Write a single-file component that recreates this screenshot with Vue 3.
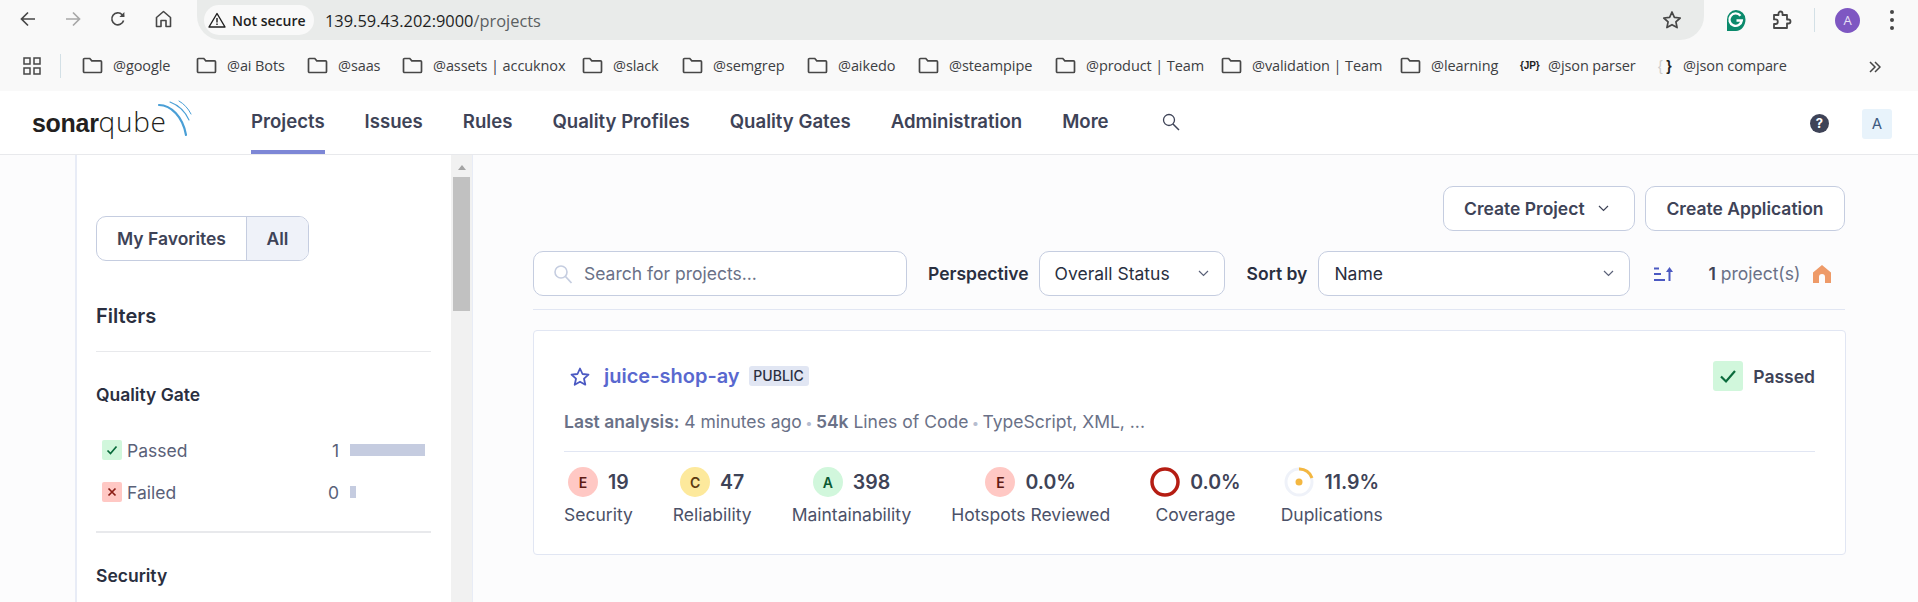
<script setup>
const bookmarks = [
  { label: '@google', width: 114 }, { label: '@ai Bots', width: 111 }, { label: '@saas', width: 95 },
  { label: '@assets | accuknox', width: 180 }, { label: '@slack', width: 100 }, { label: '@semgrep', width: 125 },
  { label: '@aikedo', width: 111 }, { label: '@steampipe', width: 137 }, { label: '@product | Team', width: 166 },
  { label: '@validation | Team', width: 179 }, { label: '@learning', width: 120 }
]
const navItems = ['Projects', 'Issues', 'Rules', 'Quality Profiles', 'Quality Gates', 'Administration', 'More']
const ratings = [
  { grade: 'E', cls: 'bad', value: '19', label: 'Security' },
  { grade: 'C', cls: 'mid', value: '47', label: 'Reliability' },
  { grade: 'A', cls: 'good', value: '398', label: 'Maintainability' },
  { grade: 'E', cls: 'bad', value: '0.0%', label: 'Hotspots Reviewed' }
]
</script>

<template>
  <div class="page">
    <div class="chrome-top">
      <svg class="ic back" width="16" height="16" viewBox="0 0 16 16"><path d="M15 8H2M8 1.5 1.5 8 8 14.5" fill="none" stroke="#474747" stroke-width="1.7"/></svg>
      <svg class="ic fwd" width="16" height="16" viewBox="0 0 16 16"><path d="M1 8h13M8 1.5 14.5 8 8 14.5" fill="none" stroke="#a8a8a8" stroke-width="1.7"/></svg>
      <svg class="ic reload" width="16" height="16" viewBox="0 0 16 16"><path d="M13.6 9.5A6 6 0 1 1 12.2 3.7L14 5.5" fill="none" stroke="#474747" stroke-width="1.6"/><path d="M14.4 1v5h-5z" fill="#474747"/></svg>
      <svg class="ic home" width="17" height="18" viewBox="0 0 17 18"><path d="M1.5 7.5 8.5 1.5l7 6V16.5H11V10.5H6v6H1.500z" fill="none" stroke="#474747" stroke-width="1.6" stroke-linejoin="round"/></svg>
      <div class="urlbar">
        <div class="secure">
          <svg width="18" height="16" viewBox="0 0 18 16"><path d="M9 1.500 17 15H1z" fill="none" stroke="#1f1f1f" stroke-width="1.4" stroke-linejoin="round"/><path d="M9 6v4.500M9 11.500v1.500" stroke="#1f1f1f" stroke-width="1.400"/></svg>
          <span>Not secure</span>
        </div>
        <div class="url"><span class="host">139.59.43.202:9000</span><span class="path">/projects</span></div>
        <svg class="urlstar" width="20" height="20" viewBox="0 0 20 20"><path d="m10 2 2.400 5.400 5.800.600-4.300 3.900 1.200 5.700L10 14.700l-5.100 2.900 1.200-5.700L1.800 8l5.800-.600z" fill="none" stroke="#474747" stroke-width="1.700" stroke-linejoin="round"/></svg>
      </div>
      <svg class="gram" width="20" height="23" viewBox="0 0 20 23"><path d="M10 1a9.500 9.500 0 0 1 9.500 9.500c0 6-4 11.500-9.500 11.500H1V10.500A9.500 9.500 0 0 1 10 1z" fill="#0b8a6c"/><path d="M14.500 6.800A6.200 6.200 0 1 0 15.800 11.500H10.500" fill="none" stroke="#fff" stroke-width="2.300"/></svg>
      <svg class="puzzle" width="21" height="21" viewBox="0 0 21 21"><path d="M3 5h4.500V3.500a2 2 0 0 1 4 0V5H16v4.500h1.500a2 2 0 0 1 0 4H16V18H3v-4h1.500a2.300 2.300 0 0 0 0-4.600H3z" fill="none" stroke="#474747" stroke-width="1.800" stroke-linejoin="round"/></svg>
      <div class="tsep"></div>
      <div class="profile">A</div>
      <div class="kebab"><i></i><i></i><i></i></div>
    </div>

    <div class="bookmarks">
      <svg class="apps" width="18" height="18" viewBox="0 0 18 18"><g fill="none" stroke="#474747" stroke-width="1.500"><rect x="1" y="1" width="6" height="6"/><rect x="11" y="1" width="6" height="6"/><rect x="1" y="11" width="6" height="6"/><rect x="11" y="11" width="6" height="6"/></g></svg>
      <div class="bsep"></div>
      <div v-for="b in bookmarks" :key="b.label" class="bm" :style="{ width: b.width + 'px' }">
        <svg width="21" height="17" viewBox="0 0 21 17"><path d="M1.500 2.500a1 1 0 0 1 1-1h5.300l2 2.300h8.700a1 1 0 0 1 1 1V14.500a1 1 0 0 1-1 1h-16a1 1 0 0 1-1-1z" fill="none" stroke="#474747" stroke-width="1.700"/></svg>
        <span>{{ b.label }}</span>
      </div>
      <div class="bm jp"><b>{JP}</b><span>@json parser</span></div>
      <div class="bm cmp"><b><em>{</em> }</b><span>@json compare</span></div>
      <svg class="more-bm" width="12" height="12" viewBox="0 0 12 12"><path d="m1 1 5 5-5 5M6 1l5 5-5 5" fill="none" stroke="#474747" stroke-width="1.500"/></svg>
    </div>

    <header class="nav">
      <div class="logo">
        <span class="sonar">sonar</span><span class="qube">qube</span>
        <svg class="waves" width="40" height="42" viewBox="0 0 40 42"><g fill="none" stroke="#4a9fd6" stroke-linecap="round"><path d="M5 6C17 6 29 18 32 36" stroke-width="2.200"/><path d="M16 3C24 6 31 12 35 21" stroke-width="1.100"/><path d="M25 2C30 5 34 9 37 15" stroke-width="1"/></g></svg>
      </div>
      <nav class="links">
        <a v-for="(n, i) in navItems" :key="n" :class="{ active: i === 0 }">{{ n }}</a>
      </nav>
      <svg class="nav-search" width="18" height="18" viewBox="0 0 18 18"><circle cx="7" cy="7" r="5.500" fill="none" stroke="#3e4357" stroke-width="1.300"/><path d="m11 11 6 6" stroke="#3e4357" stroke-width="1.500"/></svg>
      <div class="help">?</div>
      <div class="user">A</div>
    </header>

    <div class="body">
      <aside class="side">
        <div class="side-in">
          <div class="toggle"><span class="t1">My Favorites</span><span class="t2">All</span></div>
          <h2>Filters</h2>
          <hr class="h1">
          <h3 class="qg">Quality Gate</h3>
          <div class="frow">
            <span class="chk ok"><svg width="12" height="12" viewBox="0 0 12 12"><path d="m1.500 6.500 3 3 6-7" fill="none" stroke="#0a6b3c" stroke-width="1.700"/></svg></span>
            <span class="fl">Passed</span><span class="fn">1</span><span class="bar full"></span>
          </div>
          <div class="frow">
            <span class="chk ko"><svg width="10" height="10" viewBox="0 0 10 10"><path d="m1.500 1.500 7 7m0-7-7 7" fill="none" stroke="#8a1c14" stroke-width="1.700"/></svg></span>
            <span class="fl">Failed</span><span class="fn">0</span><span class="bar tiny"></span>
          </div>
          <hr class="h2">
          <h3>Security</h3>
        </div>
        <div class="scroll"><div class="sarrow"></div><div class="sthumb"></div></div>
      </aside>

      <main class="main">
        <div class="actions">
          <button class="btn cp">Create Project
            <svg width="11" height="7" viewBox="0 0 11 7"><path d="m1 1 4.500 4.500L10 1" fill="none" stroke="#3e4357" stroke-width="1.200"/></svg>
          </button>
          <button class="btn ca">Create Application</button>
        </div>
        <div class="tools">
          <div class="search">
            <svg width="20" height="20" viewBox="0 0 20 20"><circle cx="8" cy="8" r="6" fill="none" stroke="#c5cde0" stroke-width="1.600"/><path d="m12.500 12.500 6 6.500" stroke="#c5cde0" stroke-width="1.800"/></svg>
            <span>Search for projects...</span>
          </div>
          <label class="lbl persp">Perspective</label>
          <div class="sel s1"><span>Overall Status</span><svg width="11" height="7" viewBox="0 0 11 7"><path d="m1 1 4.500 4.500L10 1" fill="none" stroke="#5a6178" stroke-width="1.200"/></svg></div>
          <label class="lbl sort">Sort by</label>
          <div class="sel s2"><span>Name</span><svg width="11" height="7" viewBox="0 0 11 7"><path d="m1 1 4.500 4.500L10 1" fill="none" stroke="#5a6178" stroke-width="1.200"/></svg></div>
          <svg class="sorticon" width="20" height="14" viewBox="0 0 20 14"><path d="M0 1.500h5M0 7h7M0 13h11" stroke="#4b59c2" stroke-width="1.800"/><path d="M15.500 14V3" stroke="#4b59c2" stroke-width="2"/><path d="m12 5 3.500-5 3.500 5z" fill="#4b59c2"/></svg>
          <div class="count"><b>1</b> <span>project(s)</span></div>
          <svg class="house" width="20" height="20" viewBox="0 0 20 20"><path d="M10 1 1 8.500V19h6v-6a3 3 0 0 1 6 0v6h6V8.500z" fill="#ee9a68"/></svg>
        </div>
        <div class="tline"></div>

        <section class="card">
          <div class="ctop">
            <svg class="star" width="20" height="19" viewBox="0 0 20 19"><path d="m10 1.500 2.500 5.500 6 .7-4.500 4 1.300 6L10 14.700l-5.300 3 1.300-6-4.500-4 6-.7z" fill="none" stroke="#4b59c2" stroke-width="1.800" stroke-linejoin="round"/></svg>
            <a class="pname">juice-shop-ay</a>
            <span class="pub">PUBLIC</span>
            <span class="gate"><svg width="18" height="16" viewBox="0 0 18 16"><path d="m2 8.500 5 5L16 3" fill="none" stroke="#0a6b3c" stroke-width="2.200"/></svg></span>
            <span class="gate-t">Passed</span>
          </div>
          <div class="meta">
            <b>Last analysis:</b> 4 minutes ago <i>•</i> <b>54k</b> Lines of Code <i>•</i> TypeScript, XML, ...
          </div>
          <div class="metrics">
            <div v-for="r in ratings" :key="r.label" class="metric">
              <div class="mtop"><span class="grade" :class="r.cls">{{ r.grade }}</span><span class="val">{{ r.value }}</span></div>
              <div class="mlabel">{{ r.label }}</div>
            </div>
            <div class="metric">
              <div class="mtop">
                <svg width="30" height="30" viewBox="0 0 30 30"><circle cx="15" cy="15" r="13" fill="none" stroke="#b51d13" stroke-width="3.500"/></svg>
                <span class="val">0.0%</span>
              </div>
              <div class="mlabel">Coverage</div>
            </div>
            <div class="metric">
              <div class="mtop">
                <svg width="30" height="30" viewBox="0 0 30 30"><circle cx="15" cy="15" r="13" fill="none" stroke="#eff2f9" stroke-width="3"/><path d="M15 2A13 13 0 0 1 28 11" fill="none" stroke="#f4b740" stroke-width="3"/><circle cx="15" cy="15" r="3.500" fill="#f4b740"/></svg>
                <span class="val">11.9%</span>
              </div>
              <div class="mlabel">Duplications</div>
            </div>
          </div>
        </section>
      </main>
    </div>
  </div>
</template>

<style>
html, body { margin: 0; overflow: hidden; background: #fff; }
</style>

<style scoped>
.page { width: 1918px; height: 602px; overflow: hidden; font-family: Inter, "Liberation Sans", sans-serif; color: #3e4357; background: #fcfcfd; }

.chrome-top { height: 40px; background: #f9f9f9; display: flex; align-items: center; }
.chrome-top svg { flex: none; }
.back { margin: 0 0 2px 20px; }
.fwd { margin: 0 0 2px 29px; }
.reload { margin: 0 0 2px 29px; }
.home { margin: 0 0 2px 29px; }
.urlbar { margin-left: 25px; width: 1507px; height: 40px; box-sizing: border-box; background: #e9ebea; border-radius: 0 0 24px 24px / 0 0 24px 24px; display: flex; align-items: center; padding: 0 0 0 7px; }
.secure { height: 30px; width: 110px; box-sizing: border-box; background: #f9f9f9; border-radius: 15px; display: flex; align-items: center; padding-left: 4px; gap: 6px; font: 600 14px "Open Sans", sans-serif; color: #1f1f1f; }
.url { margin-left: 11px; font: 400 16.400px "Open Sans", sans-serif; white-space: nowrap; }
.host { color: #1f1f1f; }
.path { color: #5b5f62; }
.urlstar { margin-left: auto; margin-right: 22px; }
.gram { margin-left: 22px; }
.puzzle { margin-left: 25px; }
.tsep { width: 1px; height: 24px; background: #d3e0e6; margin-left: 22px; }
.profile { width: 25px; height: 25px; margin-left: 20px; border-radius: 50%; background: #7e57c2; color: #e8e0f6; font: 400 13px "Open Sans", sans-serif; display: flex; align-items: center; justify-content: center; }
.kebab { margin-left: 30px; display: flex; flex-direction: column; gap: 4px; }
.kebab i { width: 4px; height: 4px; background: #474747; border-radius: 50%; display: block; }

.bookmarks { height: 51px; background: #f9f9f9; display: flex; align-items: center; position: relative; font: 400 14.500px "Open Sans", sans-serif; color: #3d4043; white-space: nowrap; }
.apps { margin-left: 23px; }
.bsep { width: 1px; height: 24px; background: #d3e0e6; margin: 0 21px 0 19px; }
.bm { display: flex; align-items: center; gap: 10px; letter-spacing: -0.1px; flex: none; }
.bm svg { flex: none; }
.jp { gap: 7px; width: 138px; }
.jp b { font: 700 10px "Liberation Sans", sans-serif; color: #222; width: 21px; }
.cmp { gap: 10px; }
.cmp b { font: 700 14px "Liberation Sans", sans-serif; color: #222; width: 15px; }
.cmp b em { color: #ccc; font-style: normal; font-weight: 400; }
.more-bm { position: absolute; left: 1869px; top: 21px; }

.nav { height: 64px; box-sizing: border-box; background: #fff; border-bottom: 1px solid #e8e9ec; display: flex; align-items: stretch; }
.logo { width: 219px; margin-left: 32px; position: relative; padding-top: 13px; box-sizing: border-box; white-space: nowrap; line-height: 34px; }
.sonar { font: 700 25px/34px "Liberation Sans", sans-serif; color: #231f20; letter-spacing: -0.3px; }
.qube { font: 300 28px/34px "Open Sans", sans-serif; color: #231f20; letter-spacing: 0.7px; }
.waves { position: absolute; left: 122px; top: 8px; }
.links { display: flex; gap: 40px; height: 64px; }
.links a { font-weight: 600; font-size: 18.600px; color: #3e4357; height: 63px; box-sizing: border-box; padding-top: 18px; line-height: 24px; border-bottom: 4px solid transparent; white-space: nowrap; }
.links a.active { border-bottom-color: #7d87d6; }
.nav-search { margin: 22px 0 0 53px; }
.help { width: 19px; height: 19px; border-radius: 50%; background: #3e4357; color: #fff; font: 700 13px/19px Inter, sans-serif; text-align: center; margin: 23px 0 0 auto; }
.user { width: 30px; height: 30px; margin: 18px 26px 0 33px; border-radius: 3px; background: #e8f3fb; color: #3e5a80; font: 400 15px/30px Inter, sans-serif; text-align: center; }

.body { display: flex; height: 447px; }
.side { margin-left: 75px; width: 398px; box-sizing: border-box; flex: none; background: #fff; border-left: 2px solid #e8ecf6; border-right: 1px solid #e8ecf6; display: flex; }
.side-in { width: 374px; flex: none; padding: 61px 19px 0 19px; box-sizing: border-box; }
.toggle { display: flex; width: 213px; height: 45px; box-sizing: border-box; border: 1px solid #c5cde0; border-radius: 10px; overflow: hidden; font-weight: 600; font-size: 17.500px; line-height: 43px; color: #3e4357; }
.t1 { width: 150px; box-sizing: border-box; text-align: center; border-right: 1px solid #c5cde0; }
.t2 { flex: 1; text-align: center; background: #eff2f9; }
h2 { margin: 43px 0 0; font-size: 20px; line-height: 24px; font-weight: 600; color: #2a2f40; }
.h1 { margin: 23px 0 0; width: 335px; height: 1px; border: 0; background: #e8e9ec; }
h3 { margin: 0; font-size: 17.500px; line-height: 24px; font-weight: 600; color: #2a2f40; }
.qg { margin: 31px 0 22px; }
.frow { display: flex; align-items: center; height: 42px; padding-left: 6px; width: 329px; box-sizing: border-box; font-size: 17.500px; color: #5a6178; }
.chk { width: 20px; height: 20px; border-radius: 2px; display: flex; align-items: center; justify-content: center; flex: none; }
.ok { background: #d1f7dc; }
.ko { background: #ffc8c4; }
.fl { margin-left: 5px; flex: 1; }
.fn { margin-right: 11px; }
.bar { height: 12px; background: #c5cce0; width: 75px; flex: none; }
.bar.tiny { width: 6px; margin-right: 69px; }
.h2 { margin: 18px 0 31px; width: 335px; height: 2px; border: 0; background: #e8e9ec; }

.scroll { width: 21px; flex: none; background: #f1f1f1; margin-left: auto; }
.sarrow { width: 0; height: 0; margin: 10px auto 7px; border-left: 4px solid transparent; border-right: 4px solid transparent; border-bottom: 5px solid #a3a3a3; }
.sthumb { width: 17px; height: 134px; background: #c1c1c1; margin: 0 auto; }

.main { width: 1313px; margin-left: 60px; padding-top: 31px; box-sizing: border-box; flex: none; }
.actions { display: flex; justify-content: flex-end; gap: 10px; width: 1312px; }
.btn { height: 45px; box-sizing: border-box; background: #fff; border: 1px solid #c5cde0; border-radius: 10px; font: 600 17.500px Inter, sans-serif; color: #3e4357; display: flex; align-items: center; justify-content: center; padding: 0; }
.cp { width: 192px; justify-content: flex-start; padding-left: 20px; gap: 13px; }
.ca { width: 200px; }
.tools { display: flex; align-items: center; margin-top: 20px; height: 45px; white-space: nowrap; }
.search { width: 374px; height: 45px; box-sizing: border-box; background: #fff; border: 1px solid #c5cde0; border-radius: 10px; display: flex; align-items: center; gap: 11px; padding-left: 19px; font-size: 17.500px; color: #6a7187; }
.lbl { font-weight: 600; font-size: 17.500px; color: #2a2f40; }
.persp { margin-left: 21px; }
.sel { height: 45px; box-sizing: border-box; background: #fff; border: 1px solid #c5cde0; border-radius: 10px; display: flex; align-items: center; justify-content: space-between; padding: 0 15px; font-size: 17.500px; color: #2a2f40; }
.s1 { width: 186px; margin-left: 10px; }
.sort { margin-left: 22px; }
.s2 { width: 312px; margin-left: 11px; }
.sorticon { margin-left: 24px; }
.count { margin-left: 34px; font-size: 17.500px; color: #6a7187; }
.count b { font-weight: 600; color: #3e4357; }
.house { margin-left: 12px; }
.tline { height: 1px; background: #e1e6f3; margin-top: 13px; width: 1312px; }
.card { margin-top: 20px; height: 225px; width: 1313px; box-sizing: border-box; background: #fff; border: 1px solid #e1e6f3; border-radius: 4px; padding: 30px 30px 0; }
.ctop { display: flex; align-items: center; height: 30px; }
.star { margin-left: 6px; }
.pname { margin-left: 14px; font-weight: 600; font-size: 20px; color: #5968cf; }
.pub { margin-left: 9px; width: 60px; height: 20px; background: #e1e6f3; border-radius: 3px; font-weight: 500; font-size: 14px; line-height: 20px; color: #2a2f40; text-align: center; }
.gate { margin-left: auto; width: 30px; height: 30px; background: #d1f7dc; border-radius: 3px; display: flex; align-items: center; justify-content: center; }
.gate-t { margin-left: 10px; font-weight: 600; font-size: 17.500px; color: #3e4357; }
.meta { margin-top: 19px; height: 24px; line-height: 24px; font-size: 17.500px; color: #6a7187; padding-bottom: 17px; border-bottom: 1px solid #e1e6f3; white-space: nowrap; }
.meta b { font-weight: 600; }
.meta i { font-style: normal; color: #b6bdd0; font-size: 13px; margin: 0 -1.500px; }
.metrics { display: flex; gap: 40px; margin-top: 15px; }
.metric { display: flex; flex-direction: column; align-items: center; }
.mtop { display: flex; align-items: center; gap: 10px; height: 30px; }
.grade { width: 30px; height: 30px; border-radius: 50%; display: flex; align-items: center; justify-content: center; font-weight: 600; font-size: 14px; flex: none; }
.bad { background: #ffc8c4; color: #5f1a13; }
.mid { background: #fde99c; color: #5c3a10; }
.good { background: #d1f7dc; color: #0a5a32; }
.val { font-weight: 600; font-size: 19.500px; color: #3e4357; white-space: nowrap; }
.mlabel { margin-top: 6px; font-size: 17.500px; line-height: 24px; color: #4b5168; white-space: nowrap; }
</style>
